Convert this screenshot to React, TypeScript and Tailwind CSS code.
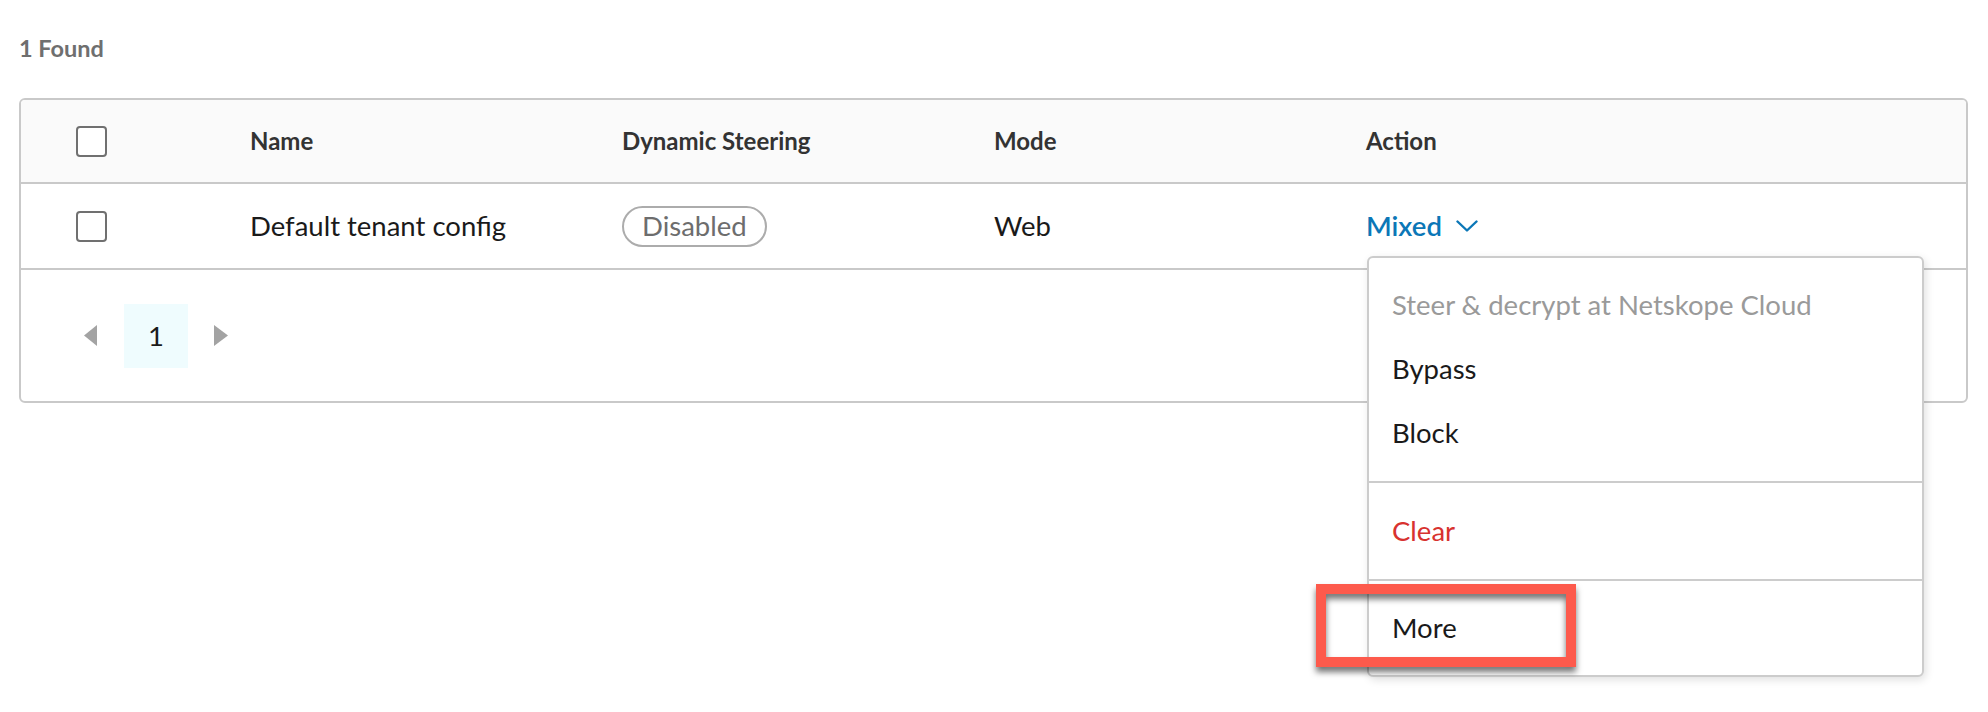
import React from 'react';

const columns = ['Name', 'Dynamic Steering', 'Mode', 'Action'];

function Checkbox() {
  return <div className="h-[31px] w-[31px] rounded-[4px] border-[2.5px] border-[#707070] bg-white" />;
}

function Chevron() {
  return (
    <svg width="22" height="12" viewBox="0 0 22 12" fill="none">
      <polyline points="1.5,1.5 11,10.5 20.5,1.5" stroke="#0b77b7" strokeWidth="2.4" strokeLinecap="round" strokeLinejoin="round" />
    </svg>
  );
}

function ActionMenu() {
  return (
    <div className="absolute left-[1px] top-[72px] z-10 w-[557px] rounded-[6px] border-2 border-[#cccccc] bg-white text-[27.5px] shadow-[2px_3px_8px_rgba(0,0,0,0.12)]">
      <div className="border-b-2 border-[#cccccc] pt-[15px] pb-[16px]">
        <div className="flex h-[64px] items-center pl-[23px] text-[#9a9a9a]">Steer &amp; decrypt at Netskope Cloud</div>
        <div className="flex h-[64px] items-center pl-[23px] text-[#1a1a1a]">Bypass</div>
        <div className="flex h-[64px] items-center pl-[23px] text-[#1a1a1a]">Block</div>
      </div>
      <div className="border-b-2 border-[#cccccc] py-[16px]">
        <div className="flex h-[64px] items-center pl-[23px] text-[#d8322f]">Clear</div>
      </div>
      <div className="py-[15px]">
        <div className="flex h-[64px] items-center pl-[23px] text-[#1a1a1a]">More</div>
      </div>
    </div>
  );
}

export default function App() {
  return (
    <div className="relative h-[712px] w-full bg-white pt-[34px] font-['Lato','Noto_Sans',sans-serif]">
      <div className="flex h-[30px] items-center pl-[19px] text-[23.5px] font-bold text-[#6f6f6f]">1 Found</div>

      <div className="ml-[19px] mr-[20px] mt-[34px] rounded-[6px] border-2 border-[#c9c9c9]">
        <div className="grid h-[84px] grid-cols-[229px_372px_372px_372px_1fr] items-center rounded-t-[4px] border-b-2 border-[#c9c9c9] bg-[#fafafa] text-[24px] font-bold text-[#333333]">
          <div className="pl-[55px]">
            <Checkbox />
          </div>
          {columns.map((c) => (
            <div key={c}>{c}</div>
          ))}
        </div>

        <div className="grid h-[86px] grid-cols-[229px_372px_372px_372px_1fr] items-center border-b-2 border-[#c9c9c9] text-[27.5px] text-[#1a1a1a]">
          <div className="pl-[55px]">
            <Checkbox />
          </div>
          <div>Default tenant config</div>
          <div>
            <span className="inline-flex h-[41px] items-center rounded-full border-2 border-[#acacac] px-[18px] text-[#6d6d6d]">
              Disabled
            </span>
          </div>
          <div>Web</div>
          <div className="relative flex h-full items-center">
            <button className="flex items-center gap-[14px] font-semibold text-[#0b77b7]">
              Mixed
              <Chevron />
            </button>
            <ActionMenu />
          </div>
        </div>

        <div className="flex h-[131px] items-center pl-[63px]">
          <svg width="13" height="21" viewBox="0 0 13 21">
            <polygon points="13,0 0,10.5 13,21" fill="#a3a3a3" />
          </svg>
          <div className="ml-[27px] flex h-[64px] w-[64px] items-center justify-center bg-[#effcfe] text-[27.5px] text-[#1a1a1a]">1</div>
          <svg className="ml-[26px]" width="14" height="21" viewBox="0 0 14 21">
            <polygon points="0,0 14,10.5 0,21" fill="#a3a3a3" />
          </svg>
        </div>
      </div>

      <div className="absolute left-[1316px] top-[584px] z-20 h-[83px] w-[260px] border-[10px] border-[#fd5a4c] drop-shadow-[0_5px_3px_rgba(0,0,0,0.55)]" />
    </div>
  );
}
